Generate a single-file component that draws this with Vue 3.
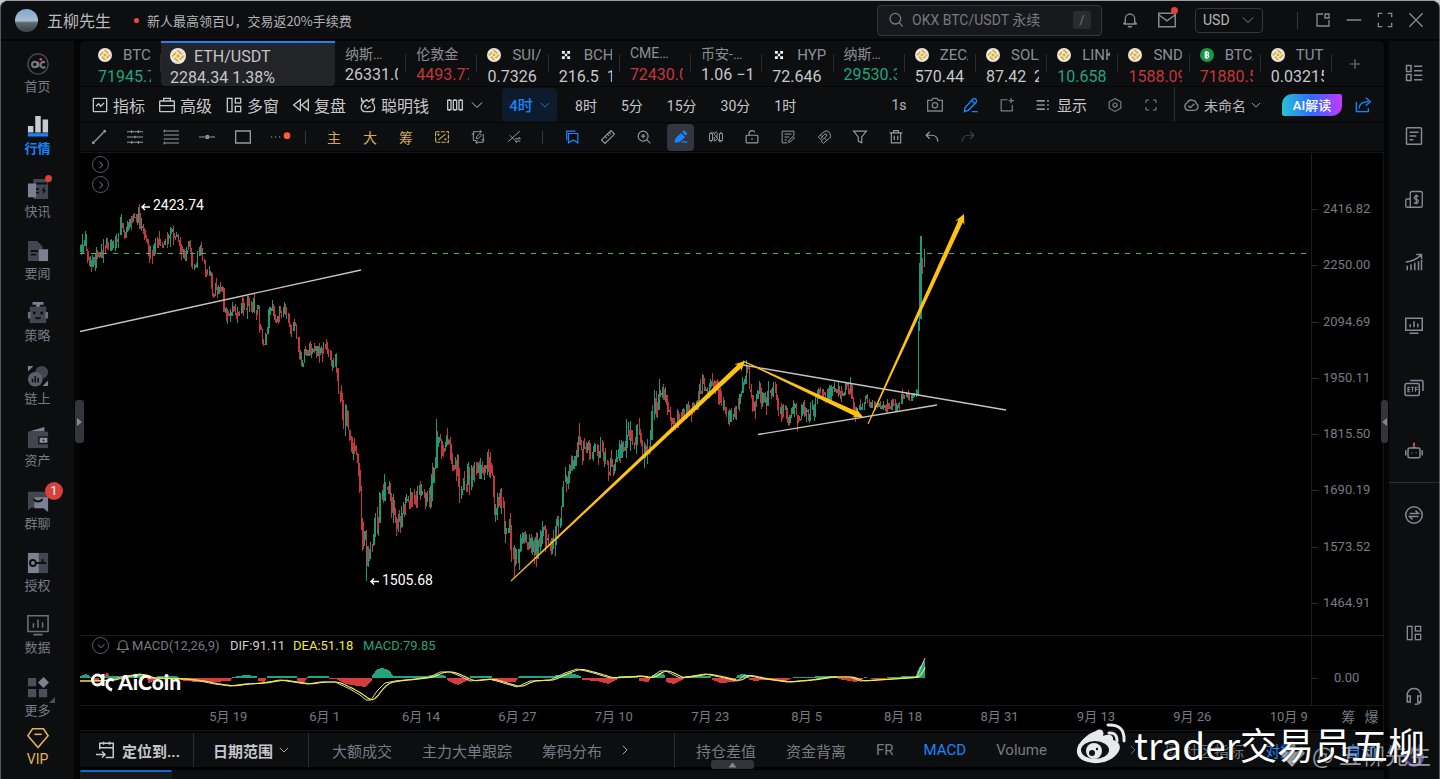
<script setup>
import { ref } from 'vue'

const search = ref('')
const currency = ref('USD')

const icons = {
  home: '<circle cx="12" cy="12" r="11" stroke="#4a4c52" stroke-width="1.500"/><circle cx="8.500" cy="12.500" r="3" stroke-width="2.200"/><path d="M12 9.500v6M19.500 10.500a3 3 0 1 0 .3 4.500" stroke-width="2.200"/><circle cx="15" cy="7" r="1.500" fill="#e0453f" stroke="none"/>',
  market: '<path d="M1 12h6v7H1zM9 1h6v18H9zM17 5h6v14h-6z" fill="#c9cacd" stroke="none"/><path d="M1 20h22v3.500H1z" fill="#1487ff" stroke="none"/>',
  flash: '<path d="M7 1h16v22H7z" fill="#43464e" stroke="none"/><path d="M1 6h9v15H1z" fill="#7b8191" stroke="none"/><path d="M10 6h12M10 12h3M10 16h3" stroke="#0e0f11" stroke-width="2"/><path d="M19 9l-3 5h2l-1 4 4-5h-2z" fill="#0e0f11" stroke="none"/>',
  news: '<path d="M1 1h10l6 6v16H1z" fill="#43464e" stroke="none"/><path d="M4 12h8M4 16h6" stroke="#0e0f11" stroke-width="2"/><path d="M13 10h10v13H13z" fill="#7b8191" stroke="none"/>',
  robot: '<path d="M6 0h12v3h-4v3h-4V3H6z" fill="#7b8191" stroke="none"/><path d="M3 5h18v18H3z" fill="#43464e" stroke="none"/><path d="M1 11h3v7H1zM20 11h3v7h-3z" fill="#6b707e" stroke="none"/><circle cx="8" cy="12" r="1.600" fill="#0e0f11" stroke="none"/><circle cx="16" cy="12" r="1.600" fill="#0e0f11" stroke="none"/><path d="M9 17q3 2 6 0" stroke="#0e0f11" stroke-width="2"/>',
  chain: '<circle cx="16" cy="8" r="7" fill="#43464e" stroke="none"/><circle cx="9" cy="15.500" r="8" fill="#5b5f6b" stroke="none"/><path d="M6 15v4M9 12v7M12 14v5" stroke="#0e0f11" stroke-width="1.700"/><path d="M1 1h6L1 7zM23 17v6h-6z" fill="#7b8191" stroke="none"/>',
  wallet: '<path d="M2 5L19 0v5z" fill="#7b8191" stroke="none"/><path d="M1 5h22v18H1z" fill="#43464e" stroke="none"/><path d="M13 11h10v7H13z" fill="#8a90a0" stroke="#0e0f11" stroke-width="1.500"/><circle cx="18" cy="14.500" r="1" fill="#0e0f11" stroke="none"/>',
  chat: '<path d="M1 2h22v17H5l-4 3z" fill="#43464e" stroke="none"/><path d="M8 8h15v16l-5-4H8z" fill="#7b8191" stroke="none"/><path d="M7 10q5 5 10 0" stroke="#0e0f11" stroke-width="2.200"/>',
  key: '<path d="M1 1h12v22H1z" fill="#7b8191" stroke="none"/><path d="M13 1h10v22H13z" fill="#43464e" stroke="none"/><circle cx="6.500" cy="12" r="3.200" stroke="#0e0f11" stroke-width="2.200"/><path d="M10 12h11M17 12V8" stroke="#0e0f11" stroke-width="2.200"/>',
  data: '<path d="M1 2h22v17H1zM7 22.500h10M7 10v5M12 6v9M17 9v6" stroke="#6b707e" stroke-width="1.700"/>',
  more: '<path d="M1 1h9v9H1zM1 13h9v9H1zM13 13h9v9h-9z" fill="#4b4f58" stroke="none"/><path d="M18 0l6 6-6 6-6-6z" fill="#7b8191" stroke="none"/>',
  vip: '<path d="M6 2h12l5 7.500L12 22.500 1 9.500z" stroke="#e0b453" stroke-width="1.700"/><path d="M8 8h8" stroke="#e0b453" stroke-width="1.700"/>',
  search: '<circle cx="11" cy="10" r="8"/><path d="M17 16l5 6"/>',
  bell: '<path d="M2 18h20M5 18v-8a7 7 0 0 1 14 0v8M2 18l3-3M22 18l-3-3M9 21q3 3 6 0"/>',
  mail: '<path d="M1 3h22v18H1zM1 5l11 8 11-8"/>',
  popout: '<path d="M12 3H3v18h18v-9M15 3h6v6h-6z"/>',
  minus: '<path d="M1 12h22"/>',
  corners: '<path d="M2 8V2h6M16 2h6v6M22 16v6h-6M8 22H2v-6"/>',
  close: '<path d="M2 2l20 20M22 2L2 22"/>',
  down: '<path d="M2 7l10 10L22 7"/>',
  right: '<path d="M7 2l10 10L7 22"/>',
  plus: '<path d="M12 2v20M2 12h20"/>',
  indicator: '<rect x="2" y="2" width="20" height="20" rx="1"/><path d="M6 14l4-4 3 4 5-5"/>',
  brief: '<rect x="1" y="6" width="22" height="16" rx="1"/><path d="M7 6V2h10v4M1 13h22"/>',
  windows: '<rect x="2" y="2" width="7" height="20"/><rect x="14" y="2" width="8" height="7"/><rect x="14" y="14" width="8" height="8"/>',
  rewind: '<path d="M11 4v16L1 12zM23 4v16l-10-8z"/>',
  smart: '<path d="M6 8Q1 10 2 17q1 5 7 5h7q6 0 6-6 0-5-4-8M2 4l4 3 4-3 3 3 5-4 3 4M2 1l1 7M22 2l-4 5"/><circle cx="8" cy="14" r="1"/><path d="M10 18q2-3 6-4"/>',
  candles: '<rect x="1" y="5" width="5" height="14"/><rect x="9.500" y="5" width="5" height="14"/><rect x="18" y="5" width="5" height="14"/><path d="M3.500 3v2M3.500 19v2M12 3v2M12 19v2M20.500 3v2M20.500 19v2"/>',
  camera: '<path d="M1 5h6l2-3h6l2 3h6v16H1z"/><circle cx="12" cy="12.500" r="4"/>',
  pen: '<path d="M2 22l1-6L15 3q2-2 4 0t1 5L8 20zM13 22h9M13 5l5 5"/>',
  addbox: '<path d="M13 3H2v19h19V12M19 0v9M15 4.500h9"/>',
  list: '<path d="M1 5h14M1 12h14M1 19h14M19 5h3M19 12h3M19 19h3"/>',
  hex: '<path d="M12 1l10 5.500v11L12 23 2 17.500v-11z"/><circle cx="12" cy="12" r="3.500"/>',
  cloud: '<path d="M7 20a6 6 0 0 1-1-11q3-6 9-4 4 0 5 5 4 2 2 7-1 3-5 3zM8 13l3 3 6-6"/>',
  share: '<path d="M2 7v15h18v-5M6 17q1-10 14-10M16 1l7 6-7 6"/>',
  line: '<path d="M5 19L19 5" /><circle cx="3.500" cy="20.500" r="1.200"/><circle cx="20.500" cy="3.500" r="1.200"/>',
  channel: '<path d="M0 4h24M0 12h24M0 20h24M7 2v4M17 2v4M12 10v4M7 18v4M17 18v4" stroke-width="1.600"/>',
  lines: '<path d="M1 3h23M1 9h23M1 15h23M1 21h23M2 1v4M2 19v4" stroke-width="1.500"/>',
  hline: '<path d="M0 12h24M11 10v4h3v-4z" stroke-width="1.700"/>',
  rect: '<path d="M1 3h22v18H1z"/>',
  dots: '<circle cx="1" cy="12" r="1" fill="currentColor" stroke="none"/><circle cx="7" cy="12" r="1" fill="currentColor" stroke="none"/><circle cx="13" cy="12" r="1" fill="currentColor" stroke="none"/><circle cx="24" cy="10" r="5" fill="#ff5a36" stroke="none"/>',
  percent: '<path d="M1 3h22v18H1z" stroke-dasharray="7 2"/><path d="M6 17L18 7"/><circle cx="6" cy="8" r=".8"/><circle cx="18" cy="16" r=".8"/>',
  replay: '<path d="M4 7V3h14M15 0l3 3-3 3M1 7h5M4 7v11h5M23 17h-5M21 17V7M21 17v4H8M11 18l-3 3 3 3M9 15l1-4 5-5 3 3-5 5z" stroke-width="1.700"/>',
  cross: '<path d="M2 20L22 2M5 9l9 9M14 15h9l-3-3M23 19h-9l3 3" stroke-width="1.700"/>',
  bookmark: '<path d="M3 18V2h15M6 6h16v16l-8-5-8 5z"/>',
  ruler: '<path d="M1 17L17 1l6 6L7 23zM7 11l3 3M11 7l3 3M14 4l3 3"/>',
  zoomin: '<circle cx="10.500" cy="10.500" r="8.500"/><path d="M17 17l6 6M10.500 7v7M7 10.500h7"/>',
  pencil: '<path d="M1 22l1-7L12 5l7 7L9 21zM14 3l3-3 6 6-3 4z" fill="#1487ff" stroke="none"/><path d="M13 22q3-5 5-2t5 0" stroke="#1487ff" stroke-width="2"/>',
  hidecandles: '<path d="M1 6h5v12H1zM18 6h5v12h-5zM3.500 3v3M3.500 18v3M20.500 3v3M20.500 18v3M6 3l13 18M9 12v7l5-3M14 5v8M9 5l5-2" stroke-width="1.700"/>',
  lock: '<rect x="2" y="9" width="20" height="13" rx="1"/><path d="M7 9V5q1-4 5-4t5 3M12 14v3"/>',
  note: '<path d="M22 10V2H2v20h9M6 7h12M6 12h8M6 17h4M13 21l1-4 7-6 2 3-7 6z" stroke-width="1.700"/>',
  magnet: '<path d="M2 12L12 3q7-4 10 3t-2 9l-9 8-4-4 9-8q2-3 0-4t-4 1l-6 8zM6 9l4 3M13 14l4 4" stroke-width="1.700"/>',
  filter: '<path d="M1 2h22l-8 10v10l-6-3v-7z"/>',
  trash: '<path d="M1 5h22M8 5V1h8v4M4 5v17h16V5M9 10v7M15 10v7"/>',
  undo: '<path d="M8 3L2 9l6 6M2 9h10q9 0 10 11"/>',
  redo: '<path d="M16 3l6 6-6 6M22 9H12Q3 9 2 20"/>',
  calendar: '<path d="M5 11V3h18v19H13M5 9h18M10 1v4M18 1v4M0 18h12M8 14l4 4-4 4"/>',
  rlist: '<rect x="2" y="2" width="6" height="8"/><rect x="2" y="14" width="6" height="8"/><path d="M12 3h11M12 9h11M12 15h11M12 21h11"/>',
  doc: '<rect x="2" y="1" width="20" height="22" rx="1"/><path d="M6 7h12M6 12h9M6 17h5"/>',
  money: '<path d="M7 23V4q0-2 2-2h12q2 0 2 2v17q0 2-2 2H3q-2 0-2-2v-7q0-2 2-2h4M18 9q-3-3-5 0t2 3.500 2 4-5 0M15 6v13" stroke-width="1.800"/>',
  trend: '<path d="M3 23v-6M8 23v-8M13 23V13M18 23V11M22 23V9M1 12q12-1 20-9M15 2h7v6"/>',
  monitor: '<path d="M1 3h22v16H1zM6 23h12M7 11v4M12 7v8M17 10v5"/>',
  etf: '<rect x="0" y="6" width="19" height="16" rx="2"/><path d="M7 2h15q2 0 2 2v12" /><path d="M7 11H4v6h3M4 14h3M8 11h4M10 11v6M14 17v-6h3M14 14h3" stroke-width="1.500"/>',
  bot: '<rect x="4" y="8" width="16" height="13" rx="2"/><path d="M1 11v7M23 11v7M9 14v1M15 14v1M10 7h4"/><path d="M12 1v4" stroke="#ff5a36" stroke-width="2.500"/>',
  swap: '<circle cx="12" cy="12" r="11"/><path d="M6 10h12l-4-4M18 14H6l4 4"/>',
  phones: '<path d="M3 14V9q2-7 9-7t9 7v5M3 12h4v8H3zM21 12h-4v8h4zM20 20q0 3-7 3"/>',
  okx: '<path d="M5 5h5v5H5zM14 5h5v5h-5zM10 10h4v4h-4zM5 14h5v5H5zM14 14h5v5h-5z" fill="#f2f2f2" stroke="none"/>',
  bnb: '<circle cx="12" cy="12" r="12" fill="#e9e8e4" stroke="none"/><path d="M12 4l8 8-8 8-8-8z" stroke="#e8a91c" stroke-width="2.600" stroke-dasharray="8 3"/><path d="M12 9l3 3-3 3-3-3z" fill="#e8a91c" stroke="none"/>',
  bch: '<circle cx="12" cy="12" r="12" fill="#159a48" stroke="none"/><path d="M9 7v10M9 7h4q3 2 0 5H9M13 12q4 2 0 5H9M11 5v14" stroke="#fff" stroke-width="2"/>'
}

const nav = [
  ['home', '首页'], ['market', '行情'], ['flash', '快讯'], ['news', '要闻'], ['robot', '策略'], ['chain', '链上'],
  ['wallet', '资产'], ['chat', '群聊'], ['key', '授权'], ['data', '数据'], ['more', '更多']
]
const tabs = [
  { t: '纳斯…', p: '26331.0' }, { t: '伦敦金', p: '4493.77', c: 'red' }, { i: 'bnb', t: 'SUI/USDT', p: '0.7326' },
  { i: 'okx', t: 'BCH/USDT', p: '216.5  1.2%' }, { t: 'CME…', p: '72430.0', c: 'red' }, { t: '币安-…', p: '1.06 −1.2%' },
  { i: 'okx', t: 'HYPE', p: '72.646' }, { t: '纳斯…', p: '29530.3', c: 'green' }, { i: 'bnb', t: 'ZEC/U', p: '570.44' },
  { i: 'bnb', t: 'SOL/U', p: '87.42  2%' }, { i: 'bnb', t: 'LINK', p: '10.658', c: 'green' },
  { i: 'bnb', t: 'SNDK', p: '1588.09', c: 'red' }, { i: 'bch', t: 'BTC/U', p: '71880.5', c: 'red' }, { i: 'bnb', t: 'TUT/U', p: '0.03215' }
]
const tools = [['indicator', '指标'], ['brief', '高级'], ['windows', '多窗'], ['rewind', '复盘'], ['smart', '聪明钱']]
const periods = ['8时', '5分', '15分', '30分', '1时']
const drawA = ['line', 'channel', 'lines', 'hline', 'rect', 'dots']
const drawB = ['主', '大', '筹']
const drawC = ['bookmark', 'ruler', 'zoomin', 'pencil', 'hidecandles', 'lock', 'note', 'magnet', 'filter', 'trash', 'undo', 'redo']
const rail = ['rlist', 'doc', 'money', 'trend', 'monitor', 'etf', 'bot']
const prices = ['2416.82', '2250.00', '2094.69', '1950.11', '1815.50', '1690.19', '1573.52', '1464.91']
const dates = ['5月 19', '6月 1', '6月 14', '6月 27', '7月 10', '7月 23', '8月 5', '8月 18', '8月 31', '9月 13', '9月 26', '10月 9']

const track = [
  80,250, 85,237, 88,268, 95,258, 100,250, 107,246, 113,243, 118,235, 121,222, 123,236, 127,225, 133,220, 138,215, 140,227,
  145,237, 150,254, 155,245, 162,239, 167,237, 171,226, 173,238, 178,236, 183,254, 189,245, 192,266, 197,259, 199,247, 203,258,
  207,275, 210,275, 212,292, 217,288, 222,285, 223,310, 228,316, 230,306, 235,314, 240,307, 247,302, 250,308, 253,303, 258,312,
  260,330, 263,346, 267,326, 268,308, 272,310, 274,320, 278,315, 283,309, 287,314, 289,327, 295,327, 298,353, 301,363, 304,350,
  308,352, 309,344, 317,350, 322,347, 328,353, 332,363, 335,357, 339,390, 343,420, 345,403, 348,430, 352,453, 355,450, 358,470,
  360,503, 362,543, 364,533, 367,555, 370,553, 373,530, 376,517, 378,527, 379,487, 382,497, 385,483, 390,497, 392,513, 397,520,
  401,523, 403,503, 408,500, 412,497, 418,498, 424,493, 429,502, 431,475, 434,475, 436,430, 438,437, 441,453, 443,443, 447,442,
  451,457, 455,467, 457,463, 459,490, 463,487, 468,482, 473,467, 478,470, 483,473, 487,458, 490,472, 492,475, 494,507, 498,500,
  502,497, 504,530, 507,520, 509,517, 510,550, 514,563, 515,547, 517,557, 520,542, 525,538, 529,547, 533,540, 536,550, 541,530,
  543,527, 547,543, 550,547, 554,540, 557,520, 560,523, 562,490, 567,480, 570,467, 575,457, 578,443, 582,455, 587,445, 591,457,
  594,440, 597,450, 601,447, 604,460, 607,470, 612,463, 617,463, 619,450, 623,442, 630,432, 633,440, 638,433, 641,447, 645,453,
  650,443, 651,410, 654,405, 657,407, 659,388, 663,392, 666,403, 670,418, 673,425, 678,418, 683,413, 690,408, 695,407, 700,390,
  703,382, 707,387, 711,380, 717,387, 720,403, 723,402, 727,415, 732,413, 737,405, 741,397, 743,377, 747,368, 749,387, 752,405,
  755,400, 757,388, 760,393, 765,402, 770,390, 773,387, 777,407, 780,412, 785,412, 787,423, 790,413, 794,407, 798,420, 802,407,
  807,413, 814,410, 816,390, 820,395, 825,395, 830,388, 833,390, 840,392, 847,387, 851,390, 852,405, 857,410, 861,403, 866,397,
  868,403, 873,402, 875,408, 880,404, 885,406, 890,405, 898,406, 901,397, 905,393, 909,397, 913,392, 917,390
]
const hist = [
  80,2, 86,4, 90,1, 91,-2, 98,-3, 100,2, 118,2, 122,-3, 126,2, 145,3, 148,-5, 156,-2, 157,2, 176,2, 183,-3, 200,-4, 212,-4, 230,-3,
  232,1, 245,3, 256,2, 258,-3, 264,-4, 267,2, 296,2, 297,-3, 303,-5, 308,2, 328,2, 329,-1, 336,-1, 345,-6, 358,-8, 365,-9, 371,-3,
  372,3, 377,9, 382,10, 388,8, 393,2, 425,2, 438,4, 445,2, 447,-2, 452,-5, 458,-7, 468,-2, 470,2, 491,2, 492,-3, 500,-4, 515,-4,
  519,2, 550,2, 560,3, 570,5, 580,2, 582,-2, 597,-3, 608,-6, 616,-2, 618,2, 637,2, 639,-3, 648,-4, 652,3, 660,5, 664,3, 666,-4,
  673,-6, 682,-2, 685,2, 710,2, 712,-2, 720,-5, 734,-4, 737,3, 743,4, 748,2, 749,-2, 755,-3, 770,-1, 785,-3, 790,-1, 793,1, 836,2,
  838,-1, 855,-4, 862,-1, 864,1, 872,-1, 885,-1, 887,1, 915,2, 919,11, 925,18
]
const dif = [
  80,680, 93,680, 112,679, 120,676, 140,673, 150,677, 185,678, 200,680, 215,683, 230,685, 245,683, 262,682, 280,679, 300,682, 308,683,
  320,681, 335,681, 350,688, 360,694, 366,699, 371,699, 377,690, 385,682, 395,680, 415,678, 430,676, 440,671, 450,671, 460,675,
  470,680, 490,678, 500,681, 517,686, 530,680, 550,679, 565,672, 577,668, 590,671, 610,677, 640,675, 650,677, 660,670, 666,670,
  680,677, 705,673, 725,677, 737,680, 745,674, 765,678, 787,681, 810,679, 830,676, 850,676, 860,680, 890,678, 905,677, 917,676,
  921,666, 925,657
]

function at(list, x) {
  let i = 0
  while (i < list.length - 4 && list[i + 2] < x) i += 2
  const t = Math.min(1, Math.max(0, (x - list[i]) / (list[i + 2] - list[i])))
  return list[i + 1] + (list[i + 3] - list[i + 1]) * t
}

let seed = 77
function rnd() {
  seed = (seed * 16807) % 2147483647
  return seed / 2147483647
}

const paths = { upWick: '', downWick: '', upBody: '', downBody: '' }
let prev = 250
for (let k = 0; k < 677; k++) {
  const fx = 80 + k * 1.236
  const x = Math.round(fx)
  const amp = fx < 340 ? 11 : fx < 660 ? 16 : fx < 860 ? 13 : 7
  const close = at(track, fx) + (rnd() - 0.5) * amp
  const open = prev
  prev = close
  const hi = Math.round(Math.min(open, close) - rnd() * rnd() * amp)
  const lo = Math.round(Math.max(open, close) + rnd() * rnd() * amp)
  const side = close < open ? 'up' : 'down'
  paths[side + 'Wick'] += `M${x} ${hi}h1V${lo}h-1z`
  if (k % 2 === 0) paths[side + 'Body'] += `M${x} ${Math.round(Math.min(open, close))}h2V${Math.round(Math.max(open, close) + 1)}h-2z`
}
paths.upWick += 'M138 206h1V222h-1zM366 540h1V580h-1zM436 418h1V440h-1zM659 378h1V395h-1zM918 320h1V395h-1zM919 262h1V330h-1zM920 235h2V318h-2zM924 248h1V266h-1z'
paths.downWick += 'M514 550h1V577h-1zM922 257h1V273h-1z'

const bars = { up: '', down: '' }
for (let x = 80; x < 925; x++) {
  const v = Math.round(at(hist, x))
  if (v > 0) bars.up += `M${x} ${677 - v}h1V677h-1z`
  if (v < 0) bars.down += `M${x} 677h1V${677 - v}h-1z`
}
let difPath = ''
let deaPath = ''
for (let x = 80; x <= 925; x += 1) {
  const cmd = x === 80 ? 'M' : 'L'
  difPath += `${cmd}${x} ${at(dif, x).toFixed(1)}`
  const dea = (at(dif, x - 1) + at(dif, x - 4) + at(dif, x - 7)) / 3
  deaPath += `${cmd}${x} ${dea.toFixed(1)}`
}

function arrow(x1, y1, x2, y2, w) {
  const len = Math.hypot(x2 - x1, y2 - y1)
  const ux = (x2 - x1) / len
  const uy = (y2 - y1) / len
  const p = (d, s) => `${(x1 + ux * d - uy * s).toFixed(1)},${(y1 + uy * d + ux * s).toFixed(1)}`
  return [p(0, 0.5), p(len - 8, w), p(len - 10, w + 2.5), p(len, 0), p(len - 10, -w - 2.5), p(len - 8, -w), p(0, -0.5)].join(' ')
}
const arrows = [arrow(511, 580, 745, 360, 2.5), arrow(743, 360, 863, 416, 2.5), arrow(868, 423, 964, 213, 2.5)]
</script>

<template>
  <div class="window">
    <header class="topbar">
      <span class="avatar"></span>
      <span class="user">五柳先生</span>
      <span class="promo-dot"></span>
      <a class="promo" href="#">新人最高领百U，交易返20%手续费</a>
      <label class="search">
        <svg class="ic s16" viewBox="0 0 24 24" v-html="icons.search"></svg>
        <input v-model="search" type="text" placeholder="OKX BTC/USDT 永续" aria-label="搜索" />
        <kbd>/</kbd>
      </label>
      <div class="top-right">
        <button class="tb" aria-label="通知"><svg class="ic s16" viewBox="0 0 24 24" v-html="icons.bell"></svg></button>
        <button class="tb mail" aria-label="消息"><svg class="ic s18" viewBox="0 0 24 24" v-html="icons.mail"></svg></button>
        <label class="currency">
          <select v-model="currency" aria-label="货币"><option>USD</option><option>CNY</option></select>
          <svg class="ic s12" viewBox="0 0 24 24" v-html="icons.down"></svg>
        </label>
        <i class="vline"></i>
        <button v-for="n in ['popout', 'minus', 'corners', 'close']" :key="n" class="wb" :aria-label="n">
          <svg class="ic s16" viewBox="0 0 24 24" v-html="icons[n]"></svg>
        </button>
      </div>
    </header>

    <div class="body">
      <nav class="side">
        <a v-for="(n, i) in nav" :key="n[0]" href="#" :class="['item', { on: i === 1 }]">
          <svg class="ic s22" viewBox="0 0 24 24" v-html="icons[n[0]]"></svg>
          <span>{{ n[1] }}</span>
          <b v-if="n[0] === 'flash'" class="dot"></b>
          <b v-if="n[0] === 'chat'" class="badge">1</b>
          <b v-if="n[0] === 'more'" class="corner"></b>
        </a>
        <a class="vip" href="#"><svg class="ic s22" viewBox="0 0 24 24" v-html="icons.vip"></svg><span>VIP</span></a>
      </nav>

      <main class="main">
        <div class="tabs">
          <button class="tab first">
            <span class="clip"><span class="name"><svg class="ic s14" viewBox="0 0 24 24" v-html="icons.bnb"></svg>BTC/U</span><span class="price green">71945.7</span></span>
          </button>
          <button class="tab active">
            <span class="clip"><span class="name"><svg class="ic s16" viewBox="0 0 24 24" v-html="icons.bnb"></svg>ETH/USDT</span><span class="price">2284.34  1.38%</span></span>
          </button>
          <button v-for="(t, i) in tabs" :key="i" class="tab">
            <span :class="['clip', { plain: !t.i }]">
              <span class="name"><svg v-if="t.i" class="ic s14" viewBox="0 0 24 24" v-html="icons[t.i]"></svg>{{ t.t }}</span>
              <span :class="['price', t.c]">{{ t.p }}</span>
            </span>
          </button>
          <button class="add" aria-label="添加"><svg class="ic s12" viewBox="0 0 24 24" v-html="icons.plus"></svg></button>
        </div>

        <div class="tools">
          <button v-for="t in tools" :key="t[0]" class="tool"><svg class="ic s16" viewBox="0 0 24 24" v-html="icons[t[0]]"></svg>{{ t[1] }}</button>
          <button class="tool kind" aria-label="图表类型"><svg class="ic s16" viewBox="0 0 24 24" v-html="icons.candles"></svg><svg class="ic s12" viewBox="0 0 24 24" v-html="icons.down"></svg></button>
          <button class="period-on">4时<svg class="ic s10" viewBox="0 0 24 24" v-html="icons.down"></svg></button>
          <div class="periods"><button v-for="p in periods" :key="p">{{ p }}</button></div>
          <div class="tools-right">
            <button class="cell txt">1s</button>
            <button class="cell" aria-label="截图"><svg class="ic s16" viewBox="0 0 24 24" v-html="icons.camera"></svg></button>
            <button class="cell blue" aria-label="画线"><svg class="ic s16" viewBox="0 0 24 24" v-html="icons.pen"></svg></button>
            <button class="cell" aria-label="新建"><svg class="ic s14" viewBox="0 0 24 24" v-html="icons.addbox"></svg></button>
            <button class="show"><svg class="ic s14" viewBox="0 0 24 24" v-html="icons.list"></svg>显示</button>
            <button class="cell" aria-label="设置"><svg class="ic s14" viewBox="0 0 24 24" v-html="icons.hex"></svg></button>
            <button class="cell" aria-label="全屏"><svg class="ic s12" viewBox="0 0 24 24" v-html="icons.corners"></svg></button>
            <i class="tall"></i>
            <button class="unnamed"><svg class="ic s16" viewBox="0 0 24 24" v-html="icons.cloud"></svg>未命名<svg class="ic s10" viewBox="0 0 24 24" v-html="icons.down"></svg></button>
            <button class="ai">AI解读</button>
            <button class="cell blue" aria-label="分享"><svg class="ic s16" viewBox="0 0 24 24" v-html="icons.share"></svg></button>
          </div>
        </div>

        <div class="draws">
          <button v-for="n in drawA" :key="n" class="cell" :aria-label="n"><svg class="ic s16" viewBox="0 0 24 24" v-html="icons[n]"></svg></button>
          <i class="sep"></i>
          <button v-for="n in drawB" :key="n" class="cell gold">{{ n }}</button>
          <button class="cell gold" aria-label="percent"><svg class="ic s14" viewBox="0 0 24 24" v-html="icons.percent"></svg></button>
          <button v-for="n in ['replay', 'cross']" :key="n" class="cell" :aria-label="n"><svg class="ic s14" viewBox="0 0 24 24" v-html="icons[n]"></svg></button>
          <i class="sep wide"></i>
          <button v-for="n in drawC" :key="n" :class="['cell', n]" :aria-label="n"><svg class="ic s14" viewBox="0 0 24 24" v-html="icons[n]"></svg></button>
        </div>

        <section class="chart">
          <div class="plot">
            <svg class="canvas" viewBox="80 152 1231 482">
              <g shape-rendering="crispEdges">
                <path :d="paths.upWick" fill="#1c9a76" /><path :d="paths.downWick" fill="#c4383b" />
                <path :d="paths.upBody" fill="#1c9a76" /><path :d="paths.downBody" fill="#c4383b" />
                <path d="M80 252.500H1311" stroke="#1fbe90" stroke-dasharray="5 6" fill="none" />
              </g>
              <path d="M80 330.500L361 269M743 364L1006 409M758 433.500L937 404" stroke="#c4c4c4" stroke-width="1.300" />
              <polygon v-for="a in arrows" :key="a" :points="a" fill="#ffc20e" />
              <path d="M150 206h-8m3-3l-3 3 3 3M379 580.500h-8m3-3l-3 3 3 3" stroke="#fff" fill="none" stroke-width="1.400" />
              <text x="153" y="209">2423.74</text>
              <text x="382" y="584">1505.68</text>
            </svg>
            <div class="expand">
              <button aria-label="展开主图"><svg class="ic s8" viewBox="0 0 24 24" v-html="icons.right"></svg></button>
              <button aria-label="展开指标"><svg class="ic s8" viewBox="0 0 24 24" v-html="icons.right"></svg></button>
            </div>
          </div>
          <div class="axis"><span v-for="p in prices" :key="p">{{ p }}</span></div>

          <div class="macd">
            <svg class="canvas" viewBox="80 635 1231 69">
              <g shape-rendering="crispEdges"><path :d="bars.up" fill="#22a47e" /><path :d="bars.down" fill="#d63c3c" /></g>
              <path :d="difPath" stroke="#d8d8d8" fill="none" />
              <path :d="deaPath" stroke="#f5ea2c" fill="none" stroke-width="1.200" />
            </svg>
            <div class="legend">
              <button class="round" aria-label="收起"><svg class="ic s8" viewBox="0 0 24 24" v-html="icons.down"></svg></button>
              <svg class="ic s14" viewBox="0 0 24 24" v-html="icons.bell"></svg>
              <span class="m1">MACD(12,26,9)</span><span class="m2">DIF:91.11</span><span class="m3">DEA:51.18</span><span class="m4">MACD:79.85</span>
            </div>
            <div class="brand">
              <svg viewBox="0 0 24 20"><circle cx="6.500" cy="8" r="5" /><path d="M12 2v12M23 8q-6-2-7 3t5 7" /><circle class="r" cx="16" cy="3" r="2" /></svg>
              <span>AiCoin</span>
            </div>
          </div>
          <div class="axis zero"><span>0.00</span></div>
        </section>

        <div class="dates">
          <div class="ticks"><span v-for="d in dates" :key="d">{{ d }}</span></div>
          <button>筹</button><button>爆</button>
        </div>

        <div class="bottom">
          <button class="locate"><svg class="ic s18" viewBox="0 0 24 24" v-html="icons.calendar"></svg>定位到...</button>
          <button class="range">日期范围<svg class="ic s10" viewBox="0 0 24 24" v-html="icons.down"></svg></button>
          <div class="group one">
            <button>大额成交</button><button>主力大单跟踪</button><button>筹码分布</button>
            <svg class="ic s10" viewBox="0 0 24 24" v-html="icons.right"></svg>
          </div>
          <div class="group two">
            <button>持仓差值</button><button>资金背离</button><button>FR</button><button class="blue">MACD</button><button>Volume</button><button>KDJ</button>
            <svg class="ic s10" viewBox="0 0 24 24" v-html="icons.right"></svg>
          </div>
          <div class="group three">
            <button class="community"><svg class="ic s14" viewBox="0 0 24 24" v-html="icons.note"></svg>社区指标</button>
            <button class="blue">对数</button><button class="blue auto">自动</button>
          </div>
        </div>
        <div class="strip"><i></i></div>
        <button class="handle left" aria-label="收起左栏"></button>
        <button class="handle rightside" aria-label="展开右栏"></button>
        <button class="handle under" aria-label="展开底栏"></button>
      </main>

      <aside class="rail">
        <button v-for="n in rail" :key="n" :aria-label="n"><svg class="ic s18" viewBox="0 0 24 24" v-html="icons[n]"></svg></button>
        <div class="rail-low">
          <button aria-label="swap"><svg class="ic s18" viewBox="0 0 24 24" v-html="icons.swap"></svg></button>
          <button class="push" aria-label="windows"><svg class="ic s16" viewBox="0 0 24 24" v-html="icons.windows"></svg></button>
          <button aria-label="support"><svg class="ic s18" viewBox="0 0 24 24" v-html="icons.phones"></svg></button>
          <button class="orb" aria-label="assistant"><i></i></button>
        </div>
      </aside>
    </div>

    <div class="mark-two">
      <svg viewBox="0 0 28 28"><path d="M14 1l4 5-4 3-4-3zM5 8l5 4 4-3 4 3 5-4 4 5-13 14L1 13z" /></svg>
      <span>@ 五柳先生</span>
    </div>
    <div class="mark-one">
      <svg viewBox="0 0 50 42">
        <path class="fill" d="M20 8c4-3 9-1 7 5 5-2 11-2 10 4 8 2 9 9 3 15-6 7-19 10-28 7C2 37-1 30 2 23 6 16 13 10 20 8z" />
        <ellipse cx="19" cy="27" rx="14" ry="9" class="hole" />
        <circle cx="18" cy="28" r="8" class="fill" />
        <circle cx="16" cy="30" r="3" class="hole" /><circle cx="21" cy="26" r="1.200" class="hole" />
        <path class="wave" d="M33 10q8-1 8 8M32 2q17-1 16 16" />
      </svg>
      <span>trader交易员五柳</span>
    </div>
  </div>
</template>

<style>
html, body { background: #c9ccd2; }
</style>

<style scoped>
* { box-sizing: border-box; }
.window {
  position: relative; display: flex; flex-direction: column; min-height: 100vh; overflow: hidden;
  background: #040405; color: #c6c7ca; border: 1px solid #55585e; border-top-color: #9a9da5; border-bottom: 0;
  border-radius: 8px 8px 0 0; font-family: Roboto, "Noto Sans CJK SC", sans-serif; font-size: 14px;
}
button { display: flex; align-items: center; justify-content: center; padding: 0; border: 0; background: none; color: inherit; font: inherit; white-space: nowrap; }
a { color: inherit; text-decoration: none; }
.ic { display: block; flex: none; fill: none; stroke: currentColor; stroke-width: 2; overflow: visible; }
.s8 { width: 8px; height: 8px; stroke-width: 3; } .s10 { width: 10px; height: 10px; } .s12 { width: 12px; height: 12px; }
.s14 { width: 14px; height: 14px; } .s16 { width: 16px; height: 16px; } .s18 { width: 18px; height: 18px; }
.s22 { width: 22px; height: 22px; }
.red { color: #c4383b; } .green { color: #22a47e; } .blue { color: #1487ff !important; }

.topbar { display: flex; align-items: center; height: 38px; padding-left: 14px; background: #0d0e10; }
.avatar { width: 23px; height: 23px; border-radius: 50%; background: linear-gradient(#7ea7d3, #a9bccf 50%, #5c6a70 60%, #38423f); }
.user { margin-left: 9px; font-size: 16px; color: #b9babd; }
.promo-dot { width: 5px; height: 5px; margin-left: 23px; border-radius: 50%; background: #ef4b3a; }
.promo { margin-left: 8px; font-family: "Noto Sans CJK SC", sans-serif; font-size: 13px; color: #b3b4b7; }
.search { display: flex; align-items: center; width: 225px; height: 31px; margin-left: auto; padding: 0 10px; border: 1px solid #34363b; border-radius: 4px; background: #17181b; color: #767a84; }
.search input { flex: 1; min-width: 0; padding: 0 0 0 8px; border: 0; outline: 0; background: none; color: inherit; font: inherit; }
.search input::placeholder { color: #767a84; opacity: 1; }
.search kbd { width: 18px; height: 18px; border-radius: 2px; background: #2a2b2f; text-align: center; font: 12px/18px Roboto, sans-serif; }
.top-right { display: flex; align-items: center; width: 337px; padding-left: 9px; color: #85888f; }
.tb { position: relative; width: 37px; height: 30px; }
.mail::after { content: ""; position: absolute; top: 2px; right: 7px; width: 7px; height: 7px; border-radius: 50%; background: #e0413c; }
.currency { position: relative; display: flex; align-items: center; width: 68px; height: 25px; margin-left: 10px; border: 1px solid #34363b; border-radius: 4px; }
.currency select { width: 100%; height: 100%; padding: 0 0 0 7px; border: 0; outline: 0; appearance: none; background: none; color: #b5b6ba; font: inherit; }
.currency svg { position: absolute; right: 8px; pointer-events: none; }
.vline { width: 1px; height: 17px; margin: 0 9px 0 34px; background: #34363b; }
.wb { width: 31px; height: 30px; }

.body { display: flex; flex: 1; margin-top: 2px; }
.side { display: flex; flex-direction: column; width: 73px; background: #0d0e10; color: #777b84; font-size: 13px; }
.item { position: relative; display: flex; flex: 1; flex-direction: column; align-items: center; padding-top: 12px; line-height: 20px; }
.item span { margin-top: 2px; }
.item.on { color: #1487ff; font-weight: 700; }
.dot { position: absolute; top: 9px; left: 44px; width: 7px; height: 7px; border-radius: 50%; background: #d93f3d; }
.badge { position: absolute; top: 4px; left: 44px; width: 18px; height: 18px; border-radius: 50%; background: #d93f3d; color: #fff; font: 13px/18px Roboto, sans-serif; text-align: center; }
.corner { position: absolute; top: 32px; left: 48px; border: 3px solid transparent; border-right-color: #4b4f58; border-bottom-color: #4b4f58; }
.vip { display: flex; flex-direction: column; align-items: center; height: 52px; color: #e0b453; font-size: 14px; line-height: 20px; }

.main { position: relative; display: flex; flex: 1; flex-direction: column; min-width: 0; margin: 0 5px 0 6px; }
.tabs { display: flex; height: 45px; border-radius: 6px 6px 0 0; background: #0d0e10; }
.tab { position: relative; flex: 1 1 0; min-width: 0; align-items: stretch; justify-content: flex-start; padding: 5px 8px 0 10px; color: #8b8e96; font-size: 15px; text-align: left; }
.tab::after { content: ""; position: absolute; top: 13px; right: 0; width: 1px; height: 18px; background: #292a2e; }
.first { flex: 0 0 81px; padding-left: 18px; padding-right: 10px; }
.active { flex: 0 0 174px; padding-left: 9px; border-top: 2px solid #1487ff; border-radius: 0 0 4px 4px; background: #232428; padding-top: 4px; color: #c4c5c8; font-size: 16px; }
.active::after { display: none; }
.clip { flex: 1; min-width: 0; overflow: hidden; }
.name { display: flex; align-items: center; gap: 11px; height: 18px; white-space: nowrap; }
.active .name { gap: 8px; }
.plain .name { height: 16px; padding-bottom: 2px; font-size: 14px; }
.price { display: block; font-size: 16px; line-height: 25px; white-space: pre; color: #c6c7ca; }
.price.red { color: #c4383b; } .price.green { color: #22a47e; }
.add { width: 52px; padding-right: 6px; color: #777b84; }

.tools { display: flex; align-items: center; height: 36px; padding-left: 12px; border-top: 1px solid #060607; background: #0d0e10; }
.tool { gap: 5px; margin-right: 14px; font-size: 16px; }
.kind { gap: 8px; margin: 0 19px 0 4px; }
.period-on { gap: 7px; width: 55px; height: 34px; border-radius: 4px; background: #0d1b2d; color: #1487ff; font-size: 15px; font-weight: 500; }
.periods { display: flex; gap: 24px; margin-left: 18px; }
.tools-right { display: flex; align-items: center; margin-left: auto; color: #7d8088; }
.cell { width: 36px; height: 27px; }
.txt { color: #b5b6ba; }
.show { gap: 7px; margin: 0 10px 0 11px; font-size: 15px; color: #c6c7ca; }
.tall { width: 1px; height: 35px; margin: 0 8px 0 5px; background: #2b2c30; }
.unnamed { gap: 5px; font-size: 14px; color: #b5b6ba; }
.unnamed .ic:first-child { color: #85888f; }
.ai { width: 60px; height: 22px; margin-left: 21px; border-radius: 10px 2px 10px 2px; background: linear-gradient(90deg, #25c3d3, #3169ff 50%, #c438ff); color: #fff; font-size: 13px; font-weight: 500; }
.tools-right .ai + .cell { width: 42px; }

.draws { display: flex; align-items: center; height: 29px; padding-left: 1px; border-top: 1px solid #060607; background: #0d0e10; color: #9699a3; }
.draws .cell { font-size: 14px; }
.draws .gold { color: #d0aa56; }
.draws .bookmark { color: #1487ff; }
.draws .redo { color: #3f4148; }
.draws .pencil { width: 27px; margin: 0 4px 0 5px; border-radius: 4px; background: #34353e; }
.sep { width: 1px; height: 13px; margin: 0 10px 0 8px; background: #34363b; }
.wide { margin: 0 11px 0 10px; }

.chart { display: grid; grid-template-columns: 1fr 73px; margin-top: 1px; border-top: 1px solid #151618; background: #000; }
.plot, .macd { position: relative; }
.canvas { display: block; width: 100%; height: auto; }
.canvas text { fill: #fff; font: 14px Roboto, sans-serif; }
.expand { position: absolute; top: 3px; left: 12px; display: grid; gap: 3px; }
.expand button, .round { width: 17px; height: 17px; border: 1px solid #5c5e64; border-radius: 50%; color: #85888f; }
.axis { display: flex; flex-direction: column; justify-content: space-between; padding: 48px 0 24px 11px; border-left: 1px solid #1b1c1f; border-right: 1px solid #151618; color: #777b84; font-size: 13px; line-height: 16px; }
.axis span { position: relative; }
.axis span::before { content: ""; position: absolute; top: 8px; left: -11px; width: 6px; height: 1px; background: #2b2c30; }
.macd, .zero { border-top: 1px solid #1b1c1f; }
.zero { justify-content: center; padding: 14px 0 0 22px; }
.zero span::before { left: -22px; }
.legend { position: absolute; top: 1px; left: 12px; display: flex; align-items: center; font-size: 13px; color: #777b84; }
.legend > svg { margin: 0 2px 0 7px; }
.m1 { width: 98px; } .m2 { width: 63px; color: #d0d1d3; } .m3 { width: 70px; color: #f5ea2c; } .m4 { color: #22a47e; }
.brand { position: absolute; top: 35px; left: 11px; display: flex; align-items: center; gap: 3px; color: #fff; font: 900 21px/22px Lato, sans-serif; }
.brand svg { width: 24px; height: 20px; fill: none; stroke: #fff; stroke-width: 3; }
.brand .r { fill: #d63c3c; stroke: none; }

.dates { display: flex; height: 26px; padding-left: 100px; border: 1px solid #151618; border-left: 0; background: #000; color: #777b84; font-size: 13px; line-height: 22px; }
.ticks { display: grid; grid-template-columns: repeat(12, 1fr); flex: 1; text-align: center; }
.dates button { width: 23px; font-size: 14px; height: 22px; }

.bottom { display: flex; height: 34px; margin-top: 2px; background: #0d0e10; color: #777b84; font-size: 15px; }
.locate { gap: 8px; width: 114px; padding-left: 3px; border-right: 1px solid #2b2c30; color: #c6c7ca; font-weight: 700; }
.range { gap: 6px; width: 115px; border-right: 1px solid #2b2c30; color: #c6c7ca; font-weight: 700; }
.group { display: flex; align-items: center; gap: 30px; }
.one { width: 366px; padding-left: 23px; border-right: 1px solid #2b2c30; }
.one svg { margin-left: -12px; color: #c6c7ca; }
.two { padding-left: 21px; gap: 30px; }
.two svg { margin-left: -6px; }
.three { margin-left: auto; padding-right: 8px; gap: 21px; }
.three .auto { margin-left: 30px; }
.community { gap: 4px; }
.strip { flex: 1; min-height: 11px; border-top: 3px solid #020202; background: #0d0e10; }
.strip i { display: block; width: 92px; height: 9px; border-top: 2px solid #1468c8; border-radius: 2px 2px 0 0; background: #17181c; }
.handle { position: absolute; width: 9px; height: 43px; border-radius: 3px; background: #34353b; }
.handle::after { content: ""; border: 4px solid transparent; border-left: 5px solid #85888f; border-right: 0; }
.left { top: 359px; left: -5px; }
.rightside { top: 359px; right: -4px; width: 7px; }
.rightside::after { transform: rotate(180deg); }
.under { bottom: 10px; left: 50%; width: 43px; height: 9px; margin-left: -21px; }
.under::after { transform: rotate(-90deg); }

.rail { display: flex; flex-direction: column; width: 50px; background: #0d0e10; color: #858994; }
.rail button { width: 100%; height: 63px; flex: none; }
.rail-low { display: flex; flex: 1; flex-direction: column; border-top: 1px solid #2b2c30; }
.rail .push { margin-top: auto; }
.rail .orb { height: 52px; padding-top: 8px; }
.orb i { width: 20px; height: 20px; border-radius: 50%; background: #2a2542; border: 3px solid #6555a8; }

.mark-one, .mark-two { position: absolute; display: flex; align-items: center; pointer-events: none; font-family: "Noto Sans CJK SC", sans-serif; white-space: nowrap; }
.mark-one { right: 14px; bottom: 10px; gap: 8px; color: #fff; font-size: 37px; line-height: 50px; text-shadow: 0 0 3px #000; }
.mark-one svg { width: 50px; height: 42px; }
.mark-one .fill { fill: #e8e9ea; } .mark-one .hole { fill: #111214; } .mark-one .wave { fill: none; stroke: #e8e9ea; stroke-width: 3; stroke-linecap: round; }
.mark-two { right: 8px; bottom: 8px; gap: 6px; color: #b9babd; opacity: 0.8; font-size: 23px; line-height: 34px; }
.mark-two svg { width: 28px; height: 28px; fill: #d0d1d3; }
</style>
